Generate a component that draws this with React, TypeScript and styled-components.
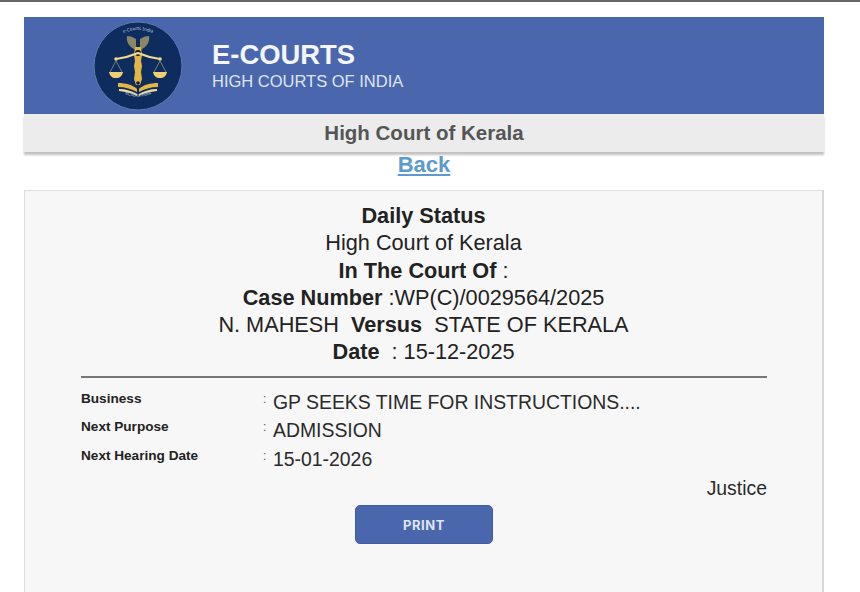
import styled, { createGlobalStyle } from "styled-components";
import { FC } from "react";

const rows = [
  { label: "Business", value: "GP SEEKS TIME FOR INSTRUCTIONS...." },
  { label: "Next Purpose", value: "ADMISSION" },
  { label: "Next Hearing Date", value: "15-01-2026" },
];

const Logo: FC = () => (
  <svg width="90" height="90" viewBox="0 0 90 90">
    <circle cx="45" cy="45" r="44" fill="#0e2c5e" stroke="#5f7cb0" strokeWidth="1" />
    <path id="arcTop" d="M9 45a36 36 0 0 1 72 0" fill="none" />
    <path id="arcBottom" d="M17 58a31 31 0 0 0 56 0" fill="none" />
    {/* fan */}
    <path d="M34 15c-1 6 2 11 9 14V18c-3-2-6-3-9-3zM56 15c1 6-2 11-9 14V18c3-2 6-3 9-3z" fill="#8a8668" />
    {/* column */}
    <path d="M42 26h6l1 8-1 6 1 5-1 6 1 7-2 6h-4l-2-6 1-7-1-6 1-5-1-6z" fill="#e2b544" />
    <circle cx="45" cy="32" r="3" fill="#111c33" />
    <circle cx="45" cy="62" r="1.8" fill="#111c33" />
    {/* beam */}
    <path d="M23 38c7-1 15-3 22-6 7 3 15 5 22 6" fill="none" stroke="#efd98a" strokeWidth="2.2" />
    <circle cx="23" cy="38" r="1.8" fill="#efd98a" />
    <circle cx="67" cy="38" r="1.8" fill="#efd98a" />
    <path d="M23 40l-6 11M23 40l6 11M67 40l-6 11M67 40l6 11" stroke="#b9b48c" strokeWidth="0.6" fill="none" />
    <path d="M16 51h14c-1 4-3 6-7 6s-6-2-7-6zM60 51h14c-1 4-3 6-7 6s-6-2-7-6z" fill="#efcf73" />
    {/* book */}
    <path d="M25 62c8 0 15 2 19 6v3c-5-3-12-5-19-5zM65 62c-8 0-15 2-19 6v3c5-3 12-5 19-5z" fill="#e2b544" />
    <path d="M26 68c7 0 13 2 18 5v2c-5-3-11-4-18-5zM64 68c-7 0-13 2-18 5v2c5-3 11-4 18-5z" fill="#f0dc98" />
    <text fontFamily="'Noto Sans', sans-serif" fontSize="4.5" fill="#c6d0e2">
      <textPath href="#arcTop" startOffset="50%" textAnchor="middle">
        e-Courts India
      </textPath>
    </text>
    <text fontFamily="'Liberation Sans', sans-serif" fontSize="4.5" fill="#c6d0e2">
      <textPath href="#arcBottom" startOffset="50%" textAnchor="middle">
        eCourts India
      </textPath>
    </text>
  </svg>
);

const App: FC = () => {
  return (
    <Page>
      <GlobalStyle />
      <TopLine />
      <Header>
        <LogoWrap>
          <Logo />
        </LogoWrap>
        <Brand>
          <BrandTitle>E-COURTS</BrandTitle>
          <BrandSub>HIGH COURTS OF INDIA</BrandSub>
        </Brand>
      </Header>
      <CourtBar>High Court of Kerala</CourtBar>
      <BackRow>
        <BackLink href="#">Back</BackLink>
      </BackRow>
      <Card>
        <Heading>
          <HeadingLine><b>Daily Status</b></HeadingLine>
          <HeadingLine>High Court of Kerala</HeadingLine>
          <HeadingLine><b>In The Court Of</b> :</HeadingLine>
          <HeadingLine><b>Case Number</b> :WP(C)/0029564/2025</HeadingLine>
          <HeadingLine>N. MAHESH&nbsp; <b>Versus</b>&nbsp; STATE OF KERALA</HeadingLine>
          <HeadingLine><b>Date</b>&nbsp; : 15-12-2025</HeadingLine>
        </Heading>
        <Divider />
        <Details>
          {rows.map((row) => (
            <DetailRow key={row.label}>
              <DetailLabel>{row.label}</DetailLabel>
              <DetailColon>:</DetailColon>
              <DetailValue>{row.value}</DetailValue>
            </DetailRow>
          ))}
        </Details>
        <Justice>Justice</Justice>
        <PrintRow>
          <PrintButton>PRINT</PrintButton>
        </PrintRow>
      </Card>
    </Page>
  );
};

const GlobalStyle = createGlobalStyle`
  html, body {
    margin: 0;
    padding: 0;
    background: #fff;
    overflow: hidden;
  }
  body {
    font-family: "Liberation Sans", Arial, sans-serif;
    color: #222;
  }
`;

const Page = styled.div`
  width: 860px;
  height: 592px;
  overflow: hidden;
`;

const TopLine = styled.div`
  height: 2px;
  margin-bottom: 15px;
  background: #666;
`;

const Header = styled.div`
  display: flex;
  align-items: center;
  height: 97px;
  width: 800px;
  margin-left: 24px;
  background: #4a67ae;
`;

const LogoWrap = styled.div`
  display: flex;
  margin-left: 69px;
`;

const Brand = styled.div`
  margin-left: 29px;
  color: #fff;
`;

const BrandTitle = styled.div`
  font-size: 27.4px;
  font-weight: 700;
  line-height: 30px;
  color: #f4f6fb;
`;

const BrandSub = styled.div`
  font-size: 16.5px;
  line-height: 22px;
  color: #dfe5f2;
`;

const CourtBar = styled.div`
  box-sizing: border-box;
  width: 800px;
  height: 38px;
  margin-left: 24px;
  background: #ececec;
  box-shadow: 0 3px 2px #c2c2c2;
  text-align: center;
  font-size: 20.5px;
  font-weight: 700;
  line-height: 38px;
  color: #555;
`;

const BackRow = styled.div`
  width: 800px;
  margin-left: 24px;
  height: 38px;
  padding-top: 2px;
  box-sizing: border-box;
  text-align: center;
  line-height: 22px;
`;

const BackLink = styled.a`
  font-size: 22px;
  font-weight: 700;
  color: #5b9bd0;
`;

const Card = styled.div`
  box-sizing: border-box;
  width: 800px;
  height: 420px;
  margin-left: 24px;
  padding: 11px 56px 0;
  background: #f7f7f7;
  border: 1px solid #dcdcdc;
  border-right: 2px solid #d8d8d8;
`;

const Heading = styled.div`
  text-align: center;
  font-size: 21.7px;
  line-height: 27.3px;
  color: #222;
`;

const HeadingLine = styled.div``;

const Divider = styled.hr`
  margin: 10px 0 0;
  width: 686px;
  border: none;
  border-top: 2px solid #777;
`;

const Details = styled.div`
  margin-top: 10px;
`;

const DetailRow = styled.div`
  display: flex;
  align-items: flex-start;
  height: 28.5px;
`;

const DetailLabel = styled.div`
  width: 182px;
  font-size: 13.6px;
  font-weight: 700;
  line-height: 22px;
  color: #222;
`;

const DetailColon = styled.div`
  width: 10px;
  font-size: 12px;
  line-height: 22px;
  color: #555;
`;

const DetailValue = styled.div`
  font-size: 19.4px;
  line-height: 28px;
  color: #2a2a2a;
`;

const Justice = styled.div`
  width: 686px;
  margin-top: 2px;
  text-align: right;
  font-size: 19.4px;
  line-height: 27px;
  color: #2a2a2a;
`;

const PrintRow = styled.div`
  display: flex;
  justify-content: center;
  width: 686px;
  margin-top: 3px;
`;

const PrintButton = styled.button`
  width: 138px;
  height: 39px;
  border: 1px solid #3f5c9f;
  border-radius: 5px;
  background: #4a67ae;
  color: #dfe5f2;
  font-family: "Inter", "Liberation Sans", sans-serif;
  font-size: 13px;
  font-weight: 700;
  letter-spacing: 0.6px;
`;

export default App;
